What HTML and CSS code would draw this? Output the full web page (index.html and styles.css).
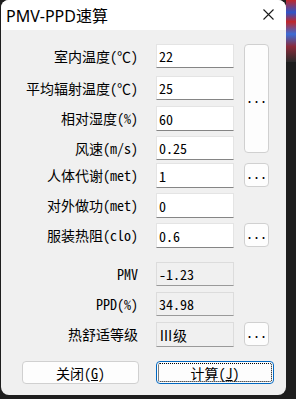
FILE: index.html
```html
<!DOCTYPE html>
<html lang="zh-CN">

<head>
  <meta charset="UTF-8" />
  <title>PMV-PPD速算</title>
  <link rel="stylesheet" href="styles.css">
</head>

<body>
  <div class="window">
    <div class="titlebar">
      <span class="title">PMV-PPD速算</span>
      <svg class="close-icon" width="11" height="11" viewBox="0 0 11 11">
        <path d="M0.5 0.5 L10.5 10.5 M10.5 0.5 L0.5 10.5" stroke="#1a1a1a" stroke-width="1.1" fill="none" />
      </svg>
    </div>

    <div class="client">
      <div class="fields">
        <button class="dots dots-big">...</button>

        <label class="lbl">室内温度(℃)</label>
        <input class="edit" type="text" value="22">

        <label class="lbl">平均辐射温度(℃)</label>
        <input class="edit" type="text" value="25">

        <label class="lbl">相对湿度(%)</label>
        <input class="edit tall" type="text" value="60">

        <label class="lbl">风速(m/s)</label>
        <input class="edit" type="text" value="0.25">

        <label class="lbl">人体代谢(met)</label>
        <input class="edit tall" type="text" value="1">
        <button class="dots">...</button>

        <label class="lbl">对外做功(met)</label>
        <input class="edit tall" type="text" value="0">

        <label class="lbl">服装热阻(clo)</label>
        <input class="edit tall" type="text" value="0.6">
        <button class="dots">...</button>

        <label class="lbl">PMV</label>
        <input class="edit readonly" type="text" value="-1.23" readonly>

        <label class="lbl">PPD(%)</label>
        <input class="edit readonly" type="text" value="34.98" readonly>

        <label class="lbl">热舒适等级</label>
        <input class="edit readonly tall" type="text" value="Ⅲ级" readonly>
        <button class="dots">...</button>
      </div>

      <div class="actions">
        <button class="btn btn-close">关闭(<u>G</u>)</button>
        <button class="btn btn-default">计算(<u>J</u>)</button>
      </div>
    </div>
  </div>
</body>

</html>
```

FILE: styles.css
```css
html,
body {
  margin: 0;
  height: 100%;
}

body {
  background-color: #1e1e1e;
  background-image: linear-gradient(to bottom, #c0262a 0, #2f54c8 20%, #c0262a 35%, #3b6cd6 55%, #8a2a3a 75%, #2b2b2b 100%);
  background-size: 10px 62px;
  background-position: right top;
  background-repeat: no-repeat;
  font-family: "Noto Sans Mono CJK SC", "Noto Sans CJK SC", "Liberation Mono", monospace;
  font-size: 14px;
  color: #000;
}

.window {
  width: 285px;
  height: 395px;
  margin-left: 1px;
  border-radius: 8px;
  overflow: hidden;
  background: #f0f0f0;
  display: flex;
  flex-direction: column;
}

.titlebar {
  height: 30px;
  flex: none;
  background: #fff;
  display: flex;
  align-items: center;
  justify-content: space-between;
  padding: 0 12px 0 5px;
}

.title {
  font-family: "Noto Sans", "Noto Sans CJK SC", sans-serif;
  font-size: 16px;
  color: #000;
  margin-top: -1px;
}

.close-icon {
  display: block;
  margin-top: -1px;
}

.client {
  flex: 1;
  padding-top: 14px;
}

.fields {
  display: grid;
  grid-template-columns: 137px 18px 78px 10px 25px;
  grid-template-rows: 32px 30px 30px 27px 30px 30px 39px 30px 30px 25px;
}

.lbl {
  grid-column: 1;
  align-self: start;
  height: 24px;
  line-height: 25px;
  text-align: right;
  white-space: nowrap;
}

.edit {
  grid-column: 3;
  align-self: start;
  box-sizing: border-box;
  width: 78px;
  height: 24px;
  margin: 0;
  padding: 0 2px;
  font: inherit;
  color: #000;
  background: #fff;
  border: 1px solid #e4e4e4;
  border-bottom: 1px solid #858585;
  border-radius: 0;
  outline: none;
}

.edit.tall {
  height: 25px;
}

.edit.readonly {
  background: #f0f0f0;
  border-color: #dcdcdc;
  border-bottom-color: #9a9a9a;
}

.dots {
  grid-column: 5;
  align-self: start;
  box-sizing: border-box;
  width: 25px;
  height: 24px;
  margin: 0;
  padding: 0 0 3px;
  font: inherit;
  letter-spacing: 0;
  color: #000;
  background: #fdfdfd;
  border: 1px solid #d0d0d0;
  border-radius: 4px;
  display: flex;
  align-items: flex-end;
  justify-content: center;
}

.dots-big {
  grid-row: 1 / span 4;
  height: 109px;
  align-items: center;
}

.actions {
  display: flex;
  margin-top: 14px;
  padding-left: 21px;
}

.btn {
  box-sizing: border-box;
  height: 23px;
  margin: 0;
  padding: 0;
  font: inherit;
  color: #000;
  background: #fdfdfd;
  border: 1px solid #d0d0d0;
  border-radius: 4px;
}

.btn-close {
  width: 117px;
}

.btn-default {
  width: 118px;
  margin-left: 17px;
  border-color: #0067c0;
  outline: 1px dotted #000;
  outline-offset: -3px;
}
```
